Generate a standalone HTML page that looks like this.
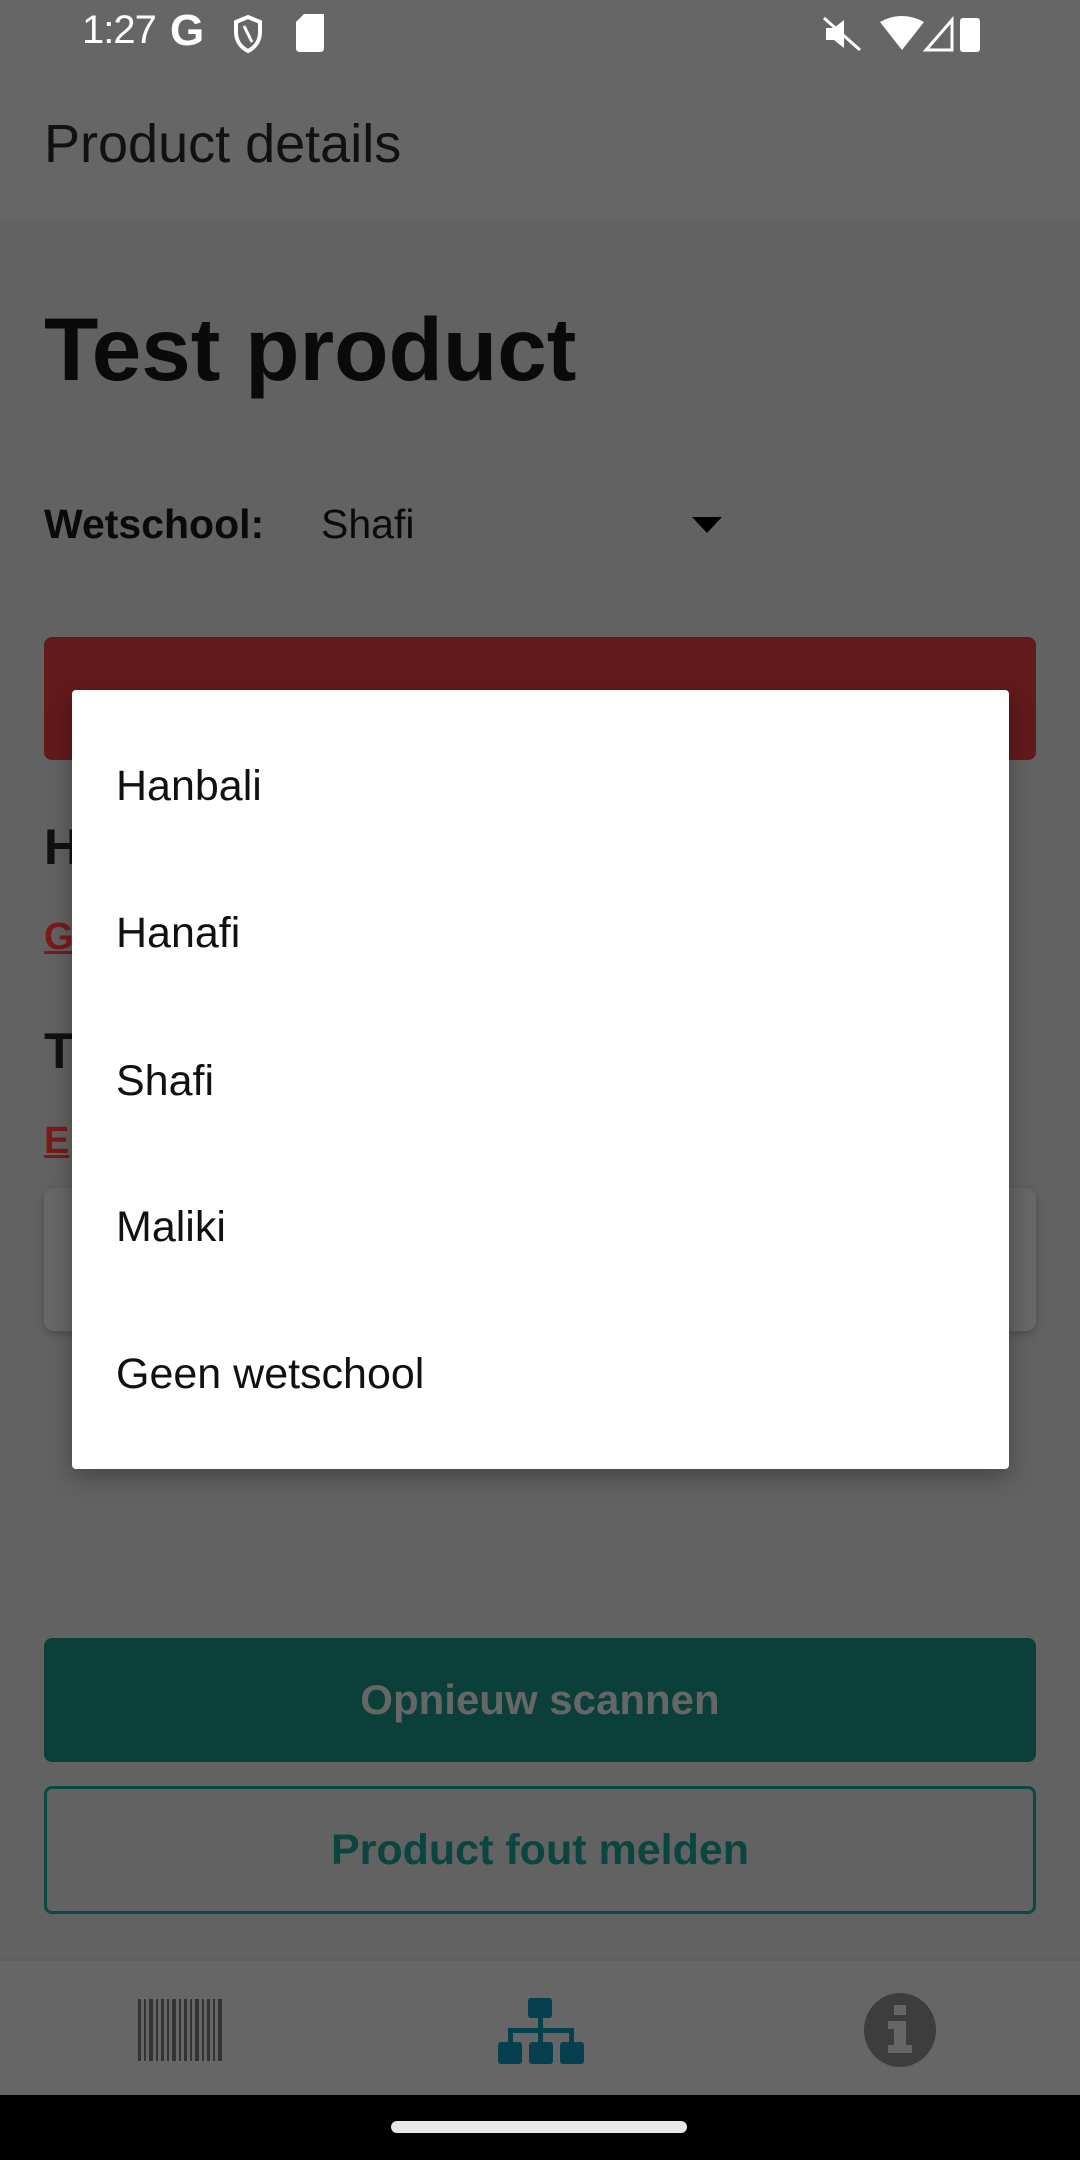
<!DOCTYPE html>
<html><head><meta charset="utf-8"><style>
*{margin:0;padding:0;box-sizing:border-box}
body{width:1080px;height:2160px;position:relative;overflow:hidden;background:#616261;font-family:"Liberation Sans",sans-serif}
.a{position:absolute}
</style></head><body>
<div class="a" style="left:0;top:0;width:1080px;height:220px;background:#666666"></div>
<div class="a" style="left:82px;top:8px;font-size:40px;color:#fff;letter-spacing:-1px">1:27</div>
<div class="a" style="left:170px;top:6px;font-size:44px;color:#fff;font-weight:bold">G</div>
<svg class="a" style="left:232px;top:14px" width="32" height="40" viewBox="0 0 32 40"><path d="M16 3 L28 8 V18 C28 28 22 34 16 37 C10 34 4 28 4 18 V8 Z" fill="none" stroke="#fff" stroke-width="4"/><path d="M12 12 L20 28" stroke="#fff" stroke-width="3"/></svg>
<svg class="a" style="left:296px;top:14px" width="28" height="38"><path d="M8 0 H28 V34 Q28 38 24 38 H4 Q0 38 0 34 V8 Z" fill="#fff"/></svg>
<svg class="a" style="left:822px;top:16px" width="40" height="36"><path d="M4 12 H12 L22 4 V32 L12 24 H4 Z" fill="#fff"/><path d="M2 2 L38 34" stroke="#fff" stroke-width="3"/></svg>
<svg class="a" style="left:880px;top:16px" width="100" height="36"><path d="M0 6 Q22 -6 44 6 L22 34 Z" fill="#fff"/><path d="M46 34 L72 4 V34 Z" fill="none" stroke="#fff" stroke-width="3"/><rect x="80" y="2" width="20" height="34" rx="3" fill="#fff"/></svg>
<div class="a" style="left:44px;top:113px;font-size:54px;color:#111">Product details</div>
<div class="a" style="left:44px;top:298px;font-size:89px;font-weight:bold;color:#0a0a0a">Test product</div>
<div class="a" style="left:44px;top:501px;font-size:41px;font-weight:bold;color:#0a0a0a">Wetschool:</div>
<div class="a" style="left:321px;top:501px;font-size:41px;color:#0a0a0a">Shafi</div>
<svg class="a" style="left:692px;top:517px" width="30" height="16"><path d="M0 0 H30 L15 16 Z" fill="#000"/></svg>
<div class="a" style="left:44px;top:637px;width:992px;height:123px;background:#621a1a;border-radius:8px"></div>
<div class="a" style="left:44px;top:818px;font-size:50px;font-weight:bold;color:#111">H</div>
<div class="a" style="left:44px;top:916px;font-size:38px;font-weight:bold;color:#7a1a1a;text-decoration:underline">G</div>
<div class="a" style="left:44px;top:1022px;font-size:50px;font-weight:bold;color:#111">T</div>
<div class="a" style="left:44px;top:1120px;font-size:38px;font-weight:bold;color:#7a1a1a;text-decoration:underline">E</div>
<div class="a" style="left:44px;top:1188px;width:992px;height:143px;background:#676767;border-radius:10px;box-shadow:0 3px 8px rgba(0,0,0,.2)"></div>
<div class="a" style="left:72px;top:690px;width:937px;height:779px;background:#fff;border-radius:4px;box-shadow:0 8px 24px rgba(0,0,0,.3)"></div>
<div class="a" style="left:116px;top:762px;font-size:43px;color:#111">Hanbali</div>
<div class="a" style="left:116px;top:909px;font-size:43px;color:#111">Hanafi</div>
<div class="a" style="left:116px;top:1057px;font-size:43px;color:#111">Shafi</div>
<div class="a" style="left:116px;top:1203px;font-size:43px;color:#111">Maliki</div>
<div class="a" style="left:116px;top:1350px;font-size:43px;color:#111">Geen wetschool</div>
<div class="a" style="left:44px;top:1638px;width:992px;height:124px;background:#0a3f3a;border-radius:8px;color:#666;font-size:42px;font-weight:bold;text-align:center;line-height:124px">Opnieuw scannen</div>
<div class="a" style="left:44px;top:1786px;width:992px;height:128px;border:3px solid #0a4a44;border-radius:8px;color:#0a4540;font-size:43px;font-weight:bold;text-align:center;line-height:122px">Product fout melden</div>
<div class="a" style="left:0;top:1959px;width:1080px;height:136px;background:#666;border-top:2px solid #5e5e5e"></div>
<svg class="a" style="left:138px;top:1999px" width="86" height="62"><g fill="#333"><rect x="0" width="3" height="62"/><rect x="6" width="2" height="62"/><rect x="11" width="4" height="62"/><rect x="18" width="2" height="62"/><rect x="23" width="3" height="62"/><rect x="29" width="2" height="62"/><rect x="34" width="4" height="62"/><rect x="41" width="2" height="62"/><rect x="46" width="3" height="62"/><rect x="52" width="2" height="62"/><rect x="57" width="4" height="62"/><rect x="64" width="2" height="62"/><rect x="69" width="3" height="62"/><rect x="75" width="2" height="62"/><rect x="80" width="4" height="62"/></g></svg>
<svg class="a" style="left:498px;top:1998px" width="86" height="66"><g fill="#063f4d"><rect x="30" y="0" width="24" height="20" rx="3"/><rect x="40" y="20" width="5" height="12"/><rect x="10" y="30" width="66" height="5"/><rect x="10" y="30" width="5" height="14"/><rect x="71" y="30" width="5" height="14"/><rect x="40" y="30" width="5" height="14"/><rect x="0" y="44" width="24" height="22" rx="3"/><rect x="31" y="44" width="24" height="22" rx="3"/><rect x="62" y="44" width="24" height="22" rx="3"/></g></svg>
<svg class="a" style="left:864px;top:1993px" width="72" height="74"><ellipse cx="36" cy="37" rx="36" ry="37" fill="#3d3d3d"/><rect x="30" y="12" width="12" height="10" fill="#666"/><path d="M24 28 H42 V52 H48 V60 H24 V52 H30 V36 H24 Z" fill="#666"/></svg>
<div class="a" style="left:0;top:2095px;width:1080px;height:65px;background:#000"></div>
<div class="a" style="left:391px;top:2121px;width:296px;height:12px;background:#e8e8e8;border-radius:6px"></div>
</body></html>
